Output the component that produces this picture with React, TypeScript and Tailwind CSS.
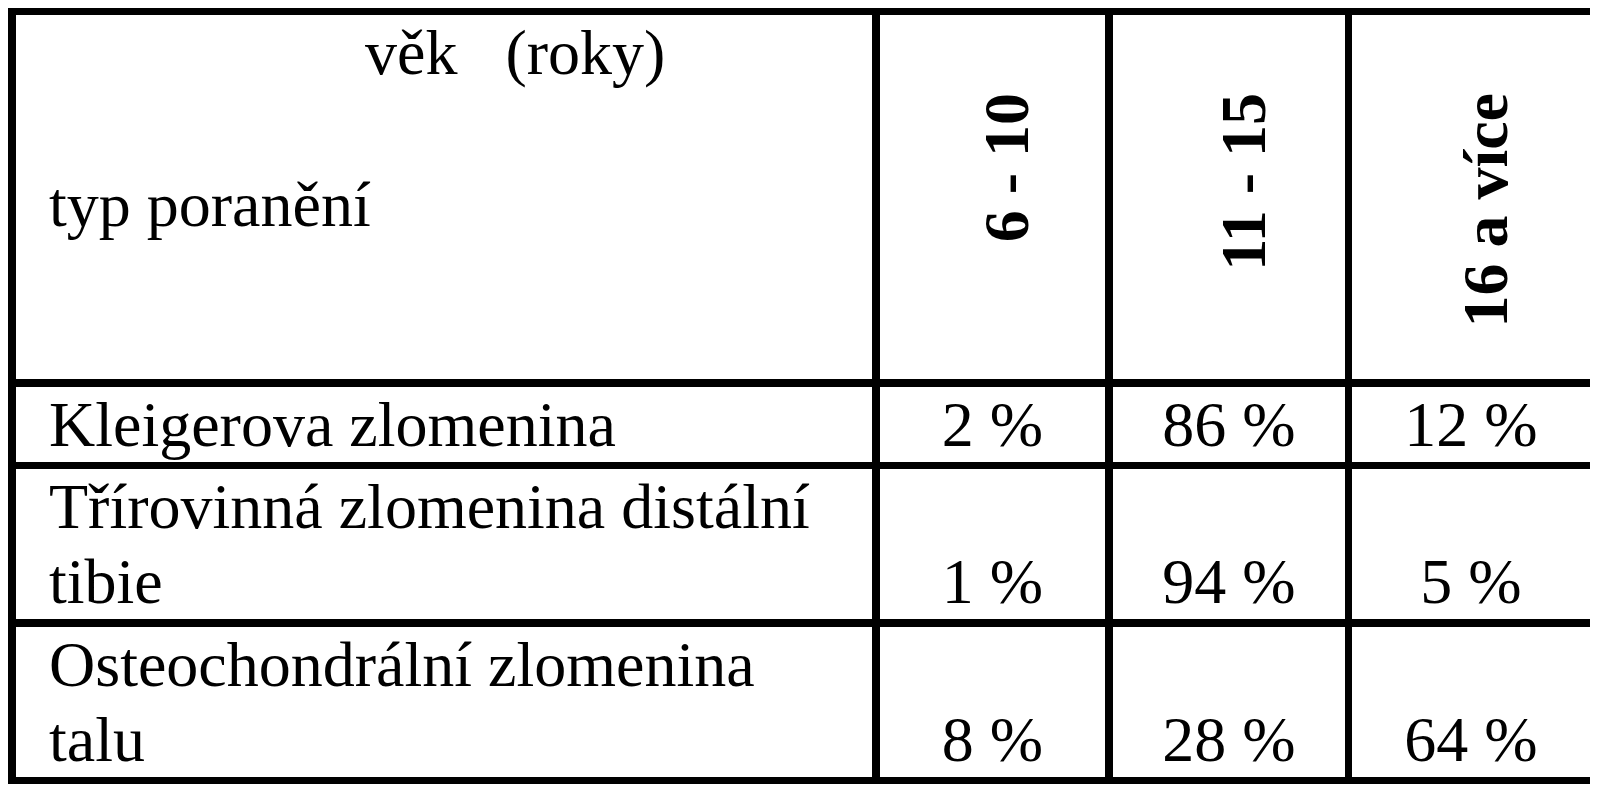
const serif = 'font-["Liberation_Serif","Times_New_Roman",serif]'

const rows = [
  { label: ['Kleigerova zlomenina'], values: ['2 %', '86 %', '12 %'], h: 'h-[75px]' },
  { label: ['Třírovinná zlomenina distální', 'tibie'], values: ['1 %', '94 %', '5 %'], h: 'h-[150px]' },
  { label: ['Osteochondrální zlomenina', 'talu'], values: ['8 %', '28 %', '64 %'], h: 'h-[150px]' },
]

const ages = ['6 - 10', '11 - 15', '16 a více']

function VerticalHead({ text }: { text: string }) {
  return (
    <div className="flex h-[364px] items-start justify-center pl-[28px] pt-[78px]">
      <span className="rotate-180 font-bold [writing-mode:vertical-rl]">{text}</span>
    </div>
  )
}

export default function App() {
  return (
    <div className={`min-h-screen bg-white pl-2 pt-2 text-[64px] leading-[75px] text-black ${serif}`}>
      <table className="table-fixed border-separate border-spacing-0">
        <colgroup>
          <col className="w-[864px]" />
          <col className="w-[233px]" />
          <col className="w-[240px]" />
          <col className="w-[245px]" />
        </colgroup>
        <thead>
          <tr>
            <th className="border-t-[7px] border-b-8 border-l-8 border-black p-0 text-left align-top font-normal">
              <div className="h-[364px]">
                <div className="whitespace-pre pl-[349px]">věk   (roky)</div>
                <div className="mt-[77px] pl-[33px]">typ poranění</div>
              </div>
            </th>
            {ages.map((a, i) => (
              <th
                key={a}
                className={`border-t-[7px] border-b-8 border-black p-0 align-top font-normal ${i === 2 ? 'border-l-[7px]' : 'border-l-8'}`}
              >
                <VerticalHead text={a} />
              </th>
            ))}
          </tr>
        </thead>
        <tbody>
          {rows.map((r, ri) => (
            <tr key={ri}>
              <td className={`border-l-8 border-black p-0 align-top ${ri === 1 ? 'border-b-8' : 'border-b-[7px]'}`}>
                <div className={`${r.h} pl-[33px]`}>
                  {r.label.map((l) => (
                    <div key={l} className="whitespace-nowrap">{l}</div>
                  ))}
                </div>
              </td>
              {r.values.map((v, vi) => (
                <td
                  key={vi}
                  className={`border-black p-0 ${vi === 2 ? 'border-l-[7px]' : 'border-l-8'} ${ri === 1 ? 'border-b-8' : 'border-b-[7px]'}`}
                >
                  <div className={`${r.h} flex items-end justify-center whitespace-pre`}>{v}</div>
                </td>
              ))}
            </tr>
          ))}
        </tbody>
      </table>
    </div>
  )
}
